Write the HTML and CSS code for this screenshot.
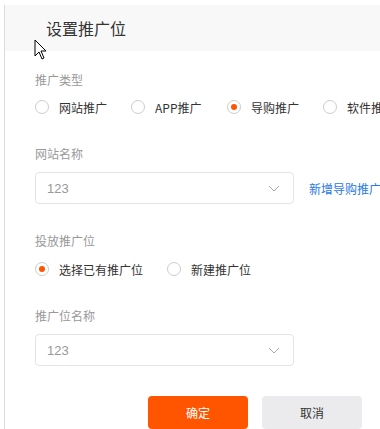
FILE: index.html
```html
<!DOCTYPE html>
<html>
<head>
    <title>设置推广位</title>
    <link rel="stylesheet" href="styles.css">
</head>
<body>
    <div class="dialog">
        <div class="dialog-header">
            <h2>设置推广位</h2>
        </div>

        <div class="dialog-body">
            <div class="field-label">推广类型</div>
            <div class="radio-group">
                <label class="radio"><span class="radio-circle"></span>网站推广</label>
                <label class="radio"><span class="radio-circle"></span>APP推广</label>
                <label class="radio"><span class="radio-circle checked"></span>导购推广</label>
                <label class="radio"><span class="radio-circle"></span>软件推广</label>
            </div>

            <div class="field-label gap-top">网站名称</div>
            <div class="select-row">
                <div class="select">
                    <span>123</span>
                    <svg class="chevron" width="12" height="7" viewBox="0 0 12 7"><path d="M1 1 L6 6 L11 1" fill="none" stroke="#a8a8a8" stroke-width="1"/></svg>
                </div>
                <a class="link" href="#">新增导购推广位</a>
            </div>

            <div class="field-label gap-top">投放推广位</div>
            <div class="radio-group">
                <label class="radio wide"><span class="radio-circle checked"></span>选择已有推广位</label>
                <label class="radio"><span class="radio-circle"></span>新建推广位</label>
            </div>

            <div class="field-label gap-top">推广位名称</div>
            <div class="select-row">
                <div class="select">
                    <span>123</span>
                    <svg class="chevron" width="12" height="7" viewBox="0 0 12 7"><path d="M1 1 L6 6 L11 1" fill="none" stroke="#a8a8a8" stroke-width="1"/></svg>
                </div>
            </div>

            <div class="buttons">
                <button class="btn btn-primary">确定</button>
                <button class="btn btn-default">取消</button>
            </div>
        </div>
    </div>

    <!-- mouse pointer captured in the screenshot -->
    <svg class="cursor" width="14" height="22" viewBox="0 0 14 22">
        <path d="M1 1 L1 17 L5 13 L8 20 L10 19 L7 12 L12 12 Z" fill="#fff" stroke="#000" stroke-width="1" stroke-linejoin="round"/>
    </svg>
</body>
</html>
```

FILE: styles.css
```css
body {
    margin: 0;
    padding: 0;
    font-family: "Noto Sans CJK SC", "Liberation Sans", sans-serif;
    background-color: #fff;
    overflow: hidden;
}

.dialog {
    margin-left: 4px;
    border-left: 1px solid #dcdcdc;
    min-height: 429px;
    box-sizing: border-box;
}

.dialog-header {
    margin-top: 5px;
    height: 46px;
    background-color: #f8f8f8;
    padding-left: 41px;
    display: flex;
    align-items: center;
}

.dialog-header h2 {
    margin: 0;
    font-size: 16px;
    font-weight: normal;
    color: #333;
}

.dialog-body {
    padding: 20px 0 0 30px;
}

.field-label {
    font-size: 12px;
    line-height: 18px;
    color: #999;
    margin-bottom: 8px;
}

.field-label.gap-top {
    margin-top: 28px;
    margin-bottom: 9px;
}

.radio-group {
    display: flex;
    height: 20px;
    align-items: center;
    white-space: nowrap;
}

.radio {
    display: flex;
    align-items: center;
    width: 96px;
    flex-shrink: 0;
    font-size: 12px;
    color: #333;
}

.radio.wide {
    width: 132px;
}

.radio-circle {
    width: 12px;
    height: 12px;
    border: 1px solid #ccc;
    border-radius: 50%;
    margin-right: 10px;
    position: relative;
    box-sizing: content-box;
}

.radio-circle.checked::after {
    content: "";
    position: absolute;
    left: 3px;
    top: 3px;
    width: 6px;
    height: 6px;
    border-radius: 50%;
    background-color: #ff5500;
}

.select-row {
    display: flex;
    align-items: center;
    white-space: nowrap;
}

.select {
    width: 259px;
    height: 32px;
    box-sizing: border-box;
    border: 1px solid #e4e4e4;
    border-radius: 4px;
    display: flex;
    align-items: center;
    justify-content: space-between;
    padding: 0 13px 0 11px;
    font-family: "Liberation Sans", sans-serif;
    font-size: 13px;
    color: #999;
    flex-shrink: 0;
}

.link {
    margin-left: 15px;
    font-size: 12px;
    color: #2878e8;
    text-decoration: none;
}

.buttons {
    display: flex;
    gap: 14px;
    margin-top: 30px;
    padding-left: 113px;
}

.btn {
    width: 100px;
    height: 33px;
    border: none;
    border-radius: 4px;
    font-family: "Noto Sans CJK SC", "Liberation Sans", sans-serif;
    font-size: 12px;
    cursor: pointer;
}

.btn-primary {
    background-color: #ff5500;
    color: #fff;
}

.btn-default {
    background-color: #ebebed;
    color: #333;
}

.cursor {
    position: absolute;
    left: 34px;
    top: 39px;
}
```
